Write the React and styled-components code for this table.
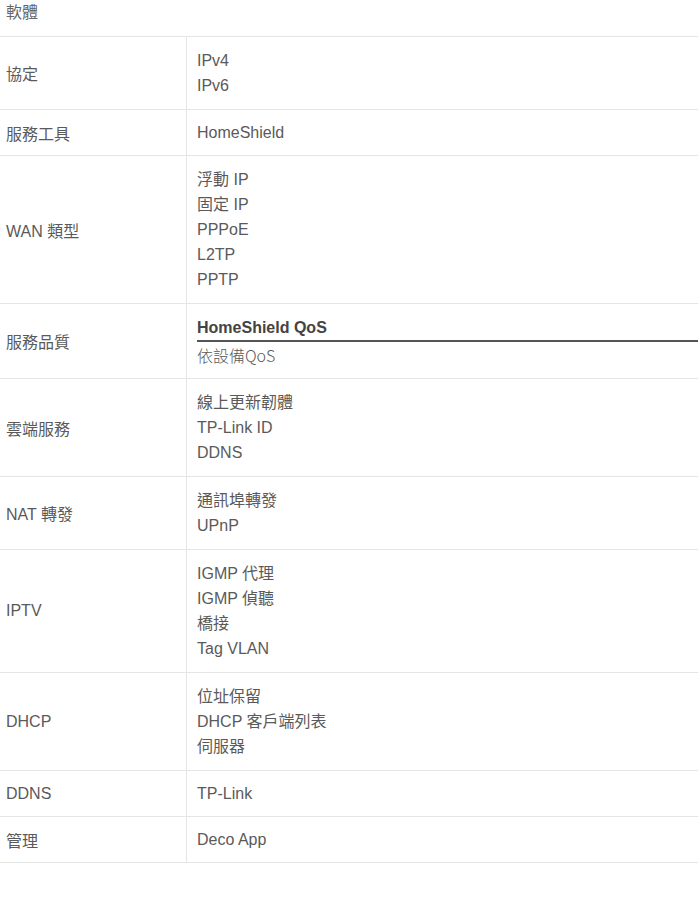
import styled, { createGlobalStyle } from "styled-components";

const GlobalStyle = createGlobalStyle`
  body {
    margin: 0;
    background: #fff;
    font-family: "Liberation Sans", Arial, "Noto Sans CJK TC", sans-serif;
    font-size: 16px;
    color: #5a5a5a;
  }
`;

const Page = styled.div`
  width: 698px;
  overflow: hidden;
`;

const Title = styled.div`
  height: 36px;
  line-height: 26px;
  padding-left: 6px;
  color: #666;
`;

const SpecTable = styled.div`
  width: 720px;
  border-top: 1px solid #e5e5e5;
`;

const Row = styled.div`
  display: grid;
  grid-template-columns: 187px 1fr;
  border-bottom: 1px solid #e5e5e5;
`;

const Label = styled.div`
  display: flex;
  align-items: center;
  padding: 0 6px;
  border-right: 1px solid #e5e5e5;
  color: #5a5a5a;
`;

const Value = styled.div`
  padding: 10px;
`;

const List = styled.div`
  display: flex;
  flex-direction: column;
  margin: ${(p) => (p.$multi ? "1px 0" : "0")};
`;

const Item = styled.div`
  line-height: 25px;
  white-space: nowrap;
`;

const SubHead = styled.div`
  line-height: 25px;
  font-weight: bold;
  color: #444;
  border-bottom: 2px solid #555;
  margin-top: 1px;
`;

const SubItem = styled.div`
  line-height: 26px;
  font-family: "Noto Sans CJK TC", "Liberation Serif", serif;
  font-weight: 300;
  font-size: 16px;
`;

const rows = [
  ["協定", ["IPv4", "IPv6"]],
  ["服務工具", ["HomeShield"]],
  ["WAN 類型", ["浮動 IP", "固定 IP", "PPPoE", "L2TP", "PPTP"]],
  ["服務品質", null],
  ["雲端服務", ["線上更新韌體", "TP-Link ID", "DDNS"]],
  ["NAT 轉發", ["通訊埠轉發", "UPnP"]],
  ["IPTV", ["IGMP 代理", "IGMP 偵聽", "橋接", "Tag VLAN"]],
  ["DHCP", ["位址保留", "DHCP 客戶端列表", "伺服器"]],
  ["DDNS", ["TP-Link"]],
  ["管理", ["Deco App"]],
];

export default function App() {
  return (
    <Page>
      <GlobalStyle />
      <Title>軟體</Title>
      <SpecTable>
        {rows.map(([label, items]) => (
          <Row key={label}>
            <Label>{label}</Label>
            <Value>
              {items ? (
                <List $multi={items.length > 1}>
                  {items.map((it) => (
                    <Item key={it}>{it}</Item>
                  ))}
                </List>
              ) : (
                <>
                  <SubHead>HomeShield QoS</SubHead>
                  <SubItem>依設備QoS</SubItem>
                </>
              )}
            </Value>
          </Row>
        ))}
      </SpecTable>
    </Page>
  );
}
